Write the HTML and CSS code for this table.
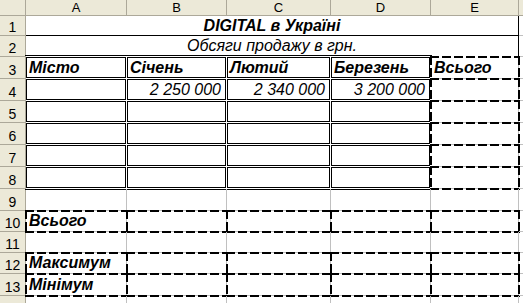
FILE: index.html
```html
<!DOCTYPE html>
<html lang="uk">
<head>
<meta charset="utf-8">
<title>DIGITAL в Україні</title>
<link rel="stylesheet" href="styles.css">
</head>
<body>
<div class="sheet">
  <div class="hd corner"></div>
  <div class="hd ch">A</div><div class="hd ch">B</div><div class="hd ch">C</div><div class="hd ch">D</div><div class="hd ch">E</div><div class="hd ch"></div>

  <div class="hd rh">1</div>
  <div class="c ttl">DIGITAL в Україні</div>
  <div class="c"></div>

  <div class="hd rh">2</div>
  <div class="c sub">Обсяги продажу в грн.</div>
  <div class="c"></div>

  <div class="hd rh">3</div>
  <div class="c dbl dbl-t lbl">Місто</div>
  <div class="c dbl dbl-t lbl">Січень</div>
  <div class="c dbl dbl-t lbl">Лютий</div>
  <div class="c dbl dbl-t lbl">Березень</div>
  <div class="c dsh lbl">Всього</div>
  <div class="c"></div>

  <div class="hd rh">4</div>
  <div class="c dbl"></div>
  <div class="c dbl num">2 250 000</div>
  <div class="c dbl num">2 340 000</div>
  <div class="c dbl num">3 200 000</div>
  <div class="c dsh"></div>
  <div class="c"></div>

  <div class="hd rh">5</div>
  <div class="c dbl"></div><div class="c dbl"></div><div class="c dbl"></div><div class="c dbl"></div>
  <div class="c dsh"></div><div class="c"></div>

  <div class="hd rh">6</div>
  <div class="c dbl"></div><div class="c dbl"></div><div class="c dbl"></div><div class="c dbl"></div>
  <div class="c dsh"></div><div class="c"></div>

  <div class="hd rh">7</div>
  <div class="c dbl"></div><div class="c dbl"></div><div class="c dbl"></div><div class="c dbl"></div>
  <div class="c dsh"></div><div class="c"></div>

  <div class="hd rh">8</div>
  <div class="c dbl dbl-b"></div><div class="c dbl dbl-b"></div><div class="c dbl dbl-b"></div><div class="c dbl dbl-b"></div>
  <div class="c dsh"></div><div class="c"></div>

  <div class="hd rh">9</div>
  <div class="c"></div><div class="c"></div><div class="c"></div><div class="c"></div><div class="c"></div><div class="c"></div>

  <div class="hd rh">10</div>
  <div class="c dsh lbl">Всього</div>
  <div class="c dsh"></div><div class="c dsh"></div><div class="c dsh"></div><div class="c dsh"></div>
  <div class="c"></div>

  <div class="hd rh">11</div>
  <div class="c"></div><div class="c"></div><div class="c"></div><div class="c"></div><div class="c"></div><div class="c"></div>

  <div class="hd rh">12</div>
  <div class="c dsh lbl">Максимум</div>
  <div class="c dsh"></div><div class="c dsh"></div><div class="c dsh"></div><div class="c dsh"></div>
  <div class="c"></div>

  <div class="hd rh">13</div>
  <div class="c dsh lbl">Мінімум</div>
  <div class="c dsh"></div><div class="c dsh"></div><div class="c dsh"></div><div class="c dsh"></div>
  <div class="c"></div>

  <div class="hd rh">14</div>
  <div class="c"></div><div class="c"></div><div class="c"></div><div class="c"></div><div class="c"></div><div class="c"></div>
</div>
</body>
</html>
```
FILE: styles.css
```css
html, body {
  margin: 0;
  background: #fff;
  overflow: hidden;
}

/* worksheet grid: row-header column, columns A–E and a sliver of F */
.sheet {
  display: grid;
  grid-template-columns: 26px 101px 100px 104px 100px 88px 1fr;
  grid-template-rows: 16px 20px 21px repeat(7, 22px) 21px 21px 21px 22px 22px;
  width: 523px;
  height: 303px;
  overflow: hidden;
  font-family: "Liberation Sans", Arial, sans-serif;
  color: #000;
}

.sheet > div {
  box-sizing: border-box;
  min-width: 0;
}

/* column and row headers */
.hd {
  background: #ece9d8;
  border-right: 1px solid #aca899;
  border-bottom: 1px solid #aca899;
  display: flex;
  justify-content: center;
  align-items: flex-end;
  white-space: nowrap;
}

.ch {
  font-size: 13px;
  line-height: 15px;
}

.rh {
  font-size: 14px;
  line-height: 16px;
}

/* ordinary cells with light gridlines */
.c {
  position: relative;
  border-right: 1px solid #c0c0c0;
  border-bottom: 1px solid #c0c0c0;
  display: flex;
  align-items: flex-end;
  padding: 0 3px 1px;
  font-size: 16px;
  line-height: 18px;
  white-space: nowrap;
}

/* merged title rows A1:E1 and A2:E2 */
.ttl {
  grid-column: 2 / 7;
  justify-content: center;
  font-weight: bold;
  font-style: italic;
  padding-bottom: 0;
  border-right-color: #000;
  border-bottom-color: #000;
}

.sub {
  grid-column: 2 / 7;
  justify-content: center;
  font-style: italic;
  border-right-color: #000;
  border-bottom-color: #fff;
}

.lbl {
  font-weight: bold;
  font-style: italic;
}

.num {
  justify-content: flex-end;
  padding-right: 5px;
  font-style: italic;
}

/* double border: inner line of each cell, gap on the gridline */
.dbl {
  border-right-color: #fff;
  border-bottom-color: #fff;
}

.dbl::after {
  content: "";
  position: absolute;
  inset: 0;
  border: 1px solid #000;
  pointer-events: none;
}

/* outer line of the double border along the top and bottom of the block */
.dbl-t::before,
.dbl-b::before {
  content: "";
  position: absolute;
  left: -1px;
  right: -2px;
  height: 1px;
  background: #000;
  pointer-events: none;
}

.dbl-t::before {
  top: -2px;
}

.dbl-b::before {
  bottom: -2px;
}

/* medium dashed box, 2px, centred on the gridlines */
.dsh::after {
  content: "";
  position: absolute;
  inset: -1px -2px -2px -1px;
  pointer-events: none;
  background:
    repeating-linear-gradient(90deg, #000 0 9px, transparent 9px 12px) left top / 100% 2px no-repeat,
    repeating-linear-gradient(90deg, #000 0 9px, transparent 9px 12px) left bottom / 100% 2px no-repeat,
    repeating-linear-gradient(180deg, #000 0 9px, transparent 9px 12px) left top / 2px 100% no-repeat,
    repeating-linear-gradient(180deg, #000 0 9px, transparent 9px 12px) right top / 2px 100% no-repeat;
}
```
